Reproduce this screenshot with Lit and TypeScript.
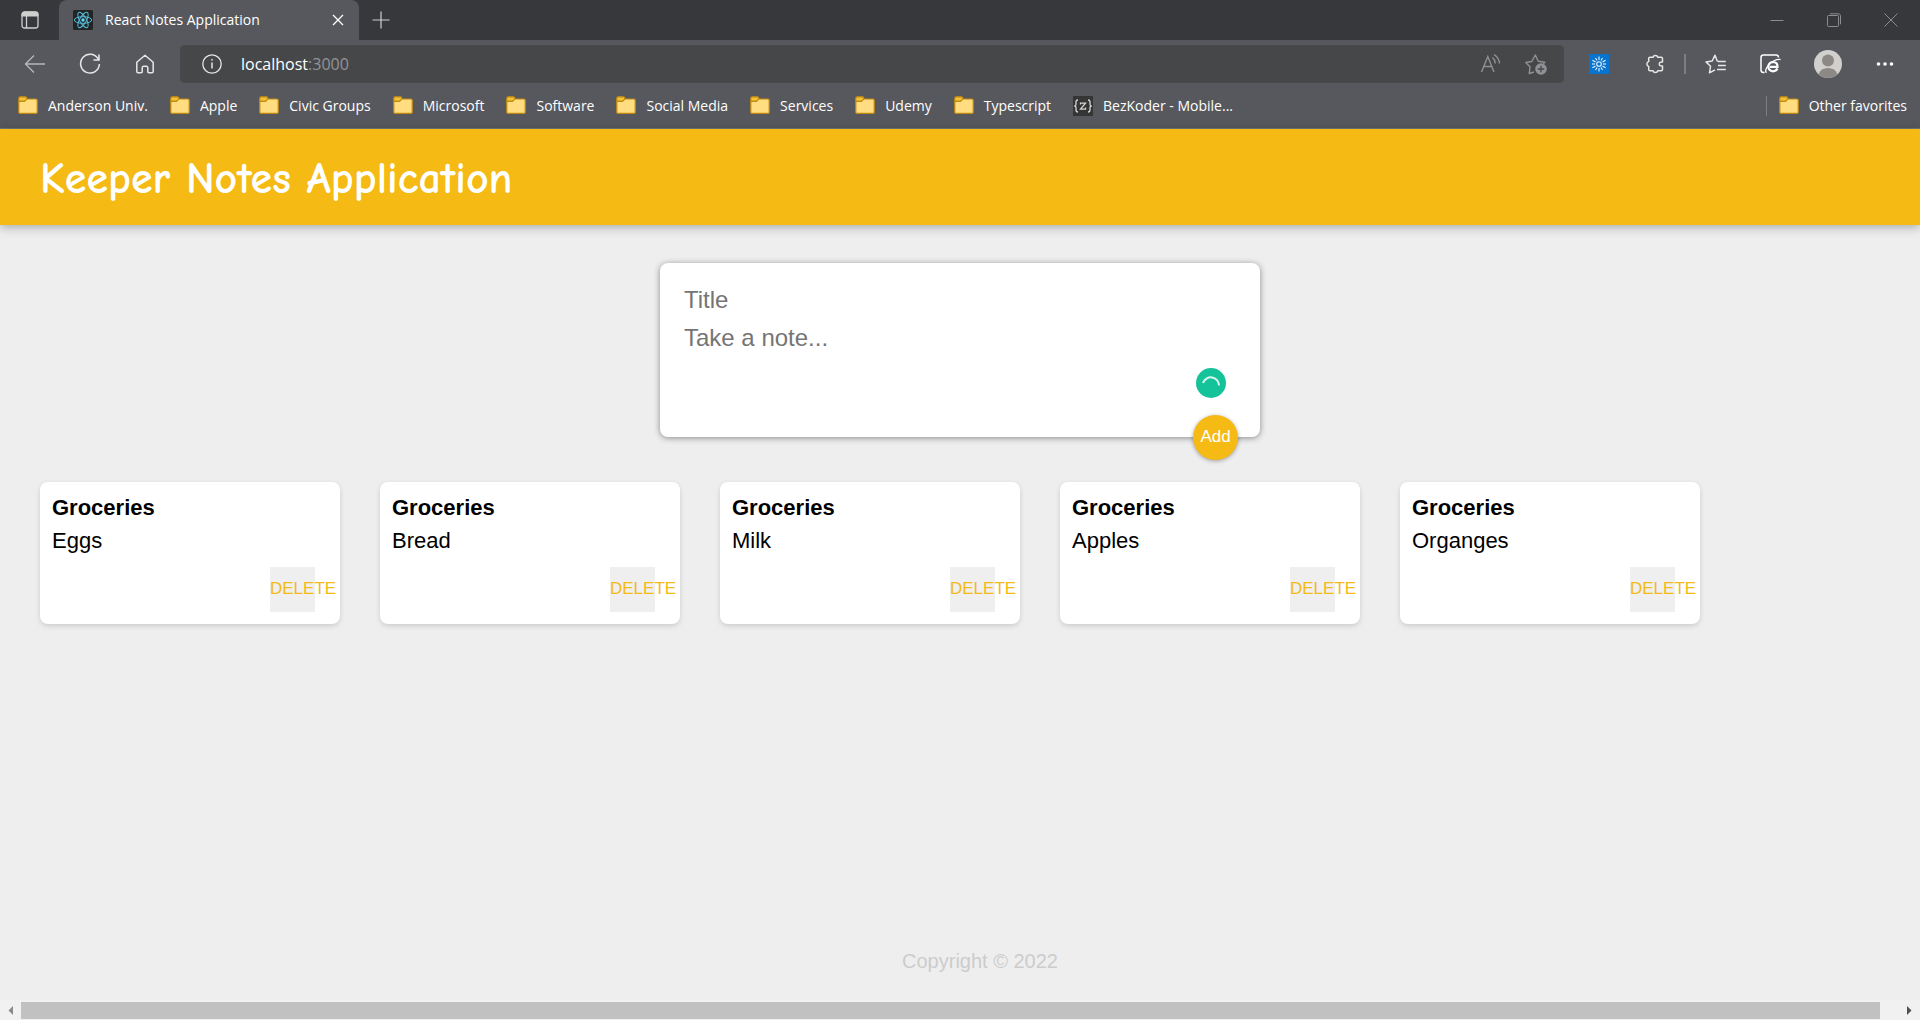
import { LitElement, html, svg, css } from "lit";
import { customElement, property } from "lit/decorators.js";

const folderIcon = html`<svg class="fav-icon" viewBox="0 0 20 20" aria-hidden="true">
  <path d="M0.8 2.2q0-1.4 1.4-1.4h5.2q1.4 0 1.4 1.4v3.2h-8z" fill="#f3c235" stroke="#c08a12" stroke-width="1.2"/>
  <path d="M0.8 5.4h5.6l2.4-2.4h9.2q1.2 0 1.2 1.2v12q0 1.2-1.2 1.2h-16q-1.2 0-1.2-1.2z" fill="#ffdd80" stroke="#c08a12" stroke-width="1.2"/>
</svg>`;

const bezIcon = html`<svg class="fav-icon" viewBox="0 0 20 20" aria-hidden="true">
  <rect width="20" height="20" fill="#353535"/>
  <g fill="none" stroke="#d6d6d6" stroke-width="1.3">
    <path d="M5 4q-2 0-2 2v2.5q0 1.5-1.8 1.5q1.8 0 1.8 1.5v2.5q0 2 2 2M15 4q2 0 2 2v2.5q0 1.5 1.8 1.5q-1.8 0-1.8 1.5v2.5q0 2-2 2"/>
    <path d="M7.5 8.5v-1.4h5l-5 6h5v-1.5"/>
  </g>
</svg>`;

const reactIcon = html`<svg class="i20 plain" viewBox="0 0 20 20" aria-hidden="true">
  <rect width="20" height="20" rx="1.5" fill="#222426"/>
  <g fill="none" stroke="#56bcd6" stroke-width="1">
    <ellipse cx="10" cy="10" rx="8.7" ry="3.3"/>
    <ellipse cx="10" cy="10" rx="8.7" ry="3.3" transform="rotate(60 10 10)"/>
    <ellipse cx="10" cy="10" rx="8.7" ry="3.3" transform="rotate(120 10 10)"/>
  </g>
  <circle cx="10" cy="10" r="1.7" fill="#61dafb"/>
</svg>`;

const rays = [0, 30, 60, 90, 120, 150, 180, 210, 240, 270, 300, 330].map(
  (a) => svg`<path d="M10 6V${a % 60 === 0 ? 2.4 : 3}" transform="rotate(${a} 10 10)"/>`
);

@customElement("browser-chrome")
export class BrowserChrome extends LitElement {
  static styles = css`
    :host { display: block; color: #fff; background: #57585d; font-family: "Segoe UI", "Open Sans", "Noto Sans", sans-serif; font-size: 14px; border-bottom: 1px solid #77787b; }
    button { background: none; border: 0; padding: 0; color: inherit; font: inherit; display: flex; align-items: center; justify-content: center; }
    svg { display: block; fill: none; stroke: currentColor; flex: none; }
    .plain { stroke: none; }
    .i20 { width: 20px; height: 20px; }
    .strip { display: flex; height: 40px; background: #37383c; }
    .side { width: 59px; color: #cfcfcf; }
    .tab { display: flex; align-items: center; width: 300px; box-sizing: border-box; padding: 0 14px; gap: 12px; background: #57585d; border-radius: 8px 8px 0 0; }
    .tab-name { flex: 1; white-space: nowrap; line-height: 18px; padding-bottom: 1px; }
    .new { width: 44px; color: #d0d0d0; }
    .window { display: flex; margin-left: auto; padding-right: 1px; color: #8c8d90; }
    .window button { width: 57px; }
    .bar { display: flex; align-items: center; height: 48px; color: #e6e6e6; }
    .nav { display: flex; padding-left: 7px; }
    .nav button { width: 55px; height: 38px; }
    .back { color: #b5b6b8; }
    .address { display: flex; align-items: center; flex: 1; height: 38px; margin-left: 8px; padding: 0 17px 0 22px; gap: 19px; background: #464749; border-radius: 5px; }
    .url { flex: 1; font-size: 16px; line-height: 22px; color: #fff; }
    .port { color: #939497; }
    .muted { color: #909194; display: flex; gap: 23px; }
    .tools { display: flex; align-items: center; padding: 0 26px 0 25px; }
    .wide { margin-right: 36px; }
    .rule { width: 2px; height: 20px; background: #7c7d80; margin: 0 19px; }
    .star { margin-right: 34px; }
    .ie { margin-right: 33px; color: #fff; }
    .face { margin-right: 34px; }
    .favorites { display: flex; align-items: center; height: 40px; padding: 0 13px 5px 18px; gap: 22px; box-sizing: border-box; }
    .fav { display: flex; align-items: center; gap: 10px; color: inherit; text-decoration: none; white-space: nowrap; }
    .fav-icon { width: 20px; height: 20px; stroke: none; }
    .other { margin-left: auto; border-left: 1px solid #7d7e81; padding-left: 12px; }
  `;

  render() {
    const names = ["Anderson Univ.", "Apple", "Civic Groups", "Microsoft", "Software", "Social Media", "Services", "Udemy", "Typescript"];
    return html`
      <div class="strip">
        <button class="side" aria-label="Tab actions">
          <svg class="i20" viewBox="0 0 20 20"><rect x="2" y="2" width="16" height="16" rx="2.5" stroke-width="1.3"/><path d="M2 4.5Q2 2 4.500 2h11Q18 2 18 4.500V6H2z" fill="currentColor"/><path d="M6.500 6v12" stroke-width="1.3"/></svg>
        </button>
        <div class="tab">
          ${reactIcon}
          <span class="tab-name">React Notes Application</span>
          <button aria-label="Close tab"><svg width="14" height="14" viewBox="0 0 14 14"><path d="M2 2l10 10M12 2L2 12" stroke-width="1.3"/></svg></button>
        </div>
        <button class="new" aria-label="New tab"><svg width="18" height="18" viewBox="0 0 18 18"><path d="M9 .5v17M.5 9h17" stroke-width="1.2"/></svg></button>
        <div class="window">
          <button aria-label="Minimize"><svg width="14" height="14" viewBox="0 0 14 14"><path d="M.5 7.500h13"/></svg></button>
          <button aria-label="Restore"><svg width="14" height="14" viewBox="0 0 14 14"><rect x=".5" y="2.500" width="11" height="11" rx="1"/><path d="M3 .8h8.500q2 0 2 2v8.500"/></svg></button>
          <button aria-label="Close"><svg width="14" height="14" viewBox="0 0 14 14"><path d="M.5.5l13 13M13.500.5l-13 13"/></svg></button>
        </div>
      </div>
      <div class="bar">
        <div class="nav">
          <button class="back" aria-label="Back"><svg width="22" height="20" viewBox="0 0 22 20"><path d="M10 1.500L1.500 10l8.500 8.500M1.500 10H21" stroke-width="1.4"/></svg></button>
          <button aria-label="Refresh"><svg width="22" height="22" viewBox="0 0 22 22"><path d="M19.300 6.200A9.400 9.400 0 1 0 20.400 11M20 1.500v5.500h-5.500" stroke-width="1.500"/></svg></button>
          <button aria-label="Home"><svg width="20" height="20" viewBox="0 0 20 20"><path d="M10 1.200L1.800 8.300v9.200q0 1.200 1.200 1.200h3.200q1 0 1-1v-4q0-1.500 1.500-1.500h2.600q1.500 0 1.500 1.500v4q0 1 1 1H17q1.200 0 1.200-1.200V8.300z" stroke-width="1.500" stroke-linejoin="round"/></svg></button>
        </div>
        <div class="address">
          <svg class="i20" viewBox="0 0 20 20"><circle cx="10" cy="10" r="9.200" stroke-width="1.300"/><path d="M10 8.500v6" stroke-width="1.500"/><circle cx="10" cy="5.800" r=".6" fill="currentColor" stroke-width=".6"/></svg>
          <span class="url">localhost<span class="port">:3000</span></span>
          <div class="muted">
            <button aria-label="Read aloud"><svg width="22" height="22" viewBox="0 0 22 22"><path d="M1.500 19L7.800 3.500 14 19M3.800 13.500h8M12.500 4.500q2.500 2 2.800 6M14 1.500q5 3.200 5.500 9" stroke-width="1.400"/></svg></button>
            <button aria-label="Add to favorites"><svg width="22" height="22" viewBox="0 0 22 22"><path d="M9 19l-4.800 1.500.9-6.500-4.300-4.500 6-1L10.300 2l3 6.300 6.500 1-1.500 1.500" stroke-width="1.400" stroke-linejoin="round"/><circle cx="16" cy="16" r="5.800" fill="currentColor" stroke="none"/><path d="M16 12.800v6.400M12.800 16h6.400" stroke="#464749" stroke-width="1.300"/></svg></button>
          </div>
        </div>
        <div class="tools">
          <button class="wide" aria-label="Loom"><svg class="i20" viewBox="0 0 20 20"><rect width="20" height="20" rx="1" fill="#0874cf" stroke="none"/><g stroke="#e8f3fc" stroke-width="1.100">${rays}<circle cx="10" cy="10" r="2.300"/></g></svg></button>
          <button aria-label="Extensions"><svg class="i20" viewBox="0 0 20 20"><path d="M5 3.200h3a2.500 2.500 0 0 1 4.800 0h3.400q1.300 0 1.300 1.300V8q-3.200-.4-3.200 2t3.200 2v3.500q0 1.300-1.300 1.300h-3.400a2.500 2.500 0 0 1-4.800 0H5q-1.300 0-1.300-1.300V12.400a2.500 2.500 0 0 1 0-4.800V4.500q0-1.300 1.300-1.300z" stroke-width="1.500" stroke-linejoin="round"/></svg></button>
          <span class="rule"></span>
          <button class="star" aria-label="Favorites"><svg width="21" height="20" viewBox="0 0 21 20"><path d="M13.500 7.200L12.200 7 10 1.200 7.200 7l-6.200.9 4.500 4.400-1 6.500 5.500-3M13 7.500h7.800M13 11.500h7.800M12 15.500h8.800" stroke-width="1.500" stroke-linejoin="round"/></svg></button>
          <button class="ie" aria-label="Internet Explorer mode"><svg width="21" height="20" viewBox="0 0 21 20"><path d="M4.500 18.500H3.500q-2.500 0-2.500-2.500V3.500Q1 1 3.500 1h12.500q2.500 0 2.500 2.500" stroke-width="1.500"/><path d="M17.500 14.600q-1.300 2.700-4.500 2.700-4.600-.4-4.600-4.700 0-4.200 4.600-4.600 4.700.2 4.500 4.900H10" stroke-width="2.200"/><path d="M6.500 18.800q-2.500-2.300 2.500-8t11.500-5.300" stroke-width="1.300"/></svg></button>
          <button class="face" aria-label="Profile"><svg class="plain" width="28" height="28" viewBox="0 0 28 28"><circle cx="14" cy="14" r="14" fill="#d2d0ce"/><circle cx="14" cy="10.500" r="6" fill="#8b8885"/><path d="M4.500 24Q7 18 14 18t9.500 6Q19.500 28 14 28T4.500 24z" fill="#8b8885"/></svg></button>
          <button aria-label="Settings and more"><svg class="plain" width="18" height="6" viewBox="0 0 18 6"><circle cx="2.500" cy="3" r="1.800" fill="#fff"/><circle cx="9" cy="3" r="1.800" fill="#fff"/><circle cx="15.500" cy="3" r="1.800" fill="#fff"/></svg></button>
        </div>
      </div>
      <nav class="favorites" aria-label="Favorites">
        ${names.map((n) => html`<a class="fav" href="#">${folderIcon}${n}</a>`)}
        <a class="fav" href="#">${bezIcon}BezKoder - Mobile...</a>
        <a class="fav other" href="#">${folderIcon}Other favorites</a>
      </nav>
    `;
  }
}

@customElement("note-card")
export class NoteCard extends LitElement {
  @property() heading = "";
  @property() content = "";

  static styles = css`
    :host { display: block; width: 300px; box-sizing: border-box; padding: 13px 25px 12px 12px; background: #fff; border-radius: 8px; box-shadow: 0 2px 5px #ccc; font-size: 22px; }
    .title { margin: 0; font-size: 22px; line-height: 26px; }
    .text { margin: 6px 0 12px; line-height: 28px; }
    .row { display: flex; justify-content: flex-end; }
    .delete { width: 45px; height: 45px; padding: 0 0 2px; border: 0; background: #efefef; color: #f5ba13; font: 17px/20px "Liberation Sans", Arial, sans-serif; text-align: left; white-space: nowrap; }
  `;

  render() {
    return html`
      <h2 class="title">${this.heading}</h2>
      <p class="text">${this.content}</p>
      <div class="row"><button class="delete">DELETE</button></div>
    `;
  }
}

@customElement("app-root")
export class AppRoot extends LitElement {
  static styles = css`
    :host { display: flex; flex-direction: column; min-height: 100vh; background: #eee; font-family: "Liberation Sans", Arial, sans-serif; overflow: hidden; }
    .header { display: flex; align-items: center; height: 96px; box-sizing: border-box; padding: 4px 40px 0; background: #f5ba13; box-shadow: 0 2px 10px rgba(0, 0, 0, 0.3); }
    .brand { margin: 0; color: #fff; font: 700 44px/60px "Comic Sans MS", "Comic Neue", "Open Sans", sans-serif; white-space: nowrap; }
    .page { flex: 1; display: flex; flex-direction: column; }
    .form { position: relative; width: 600px; box-sizing: border-box; margin: 38px auto 45px; padding: 18px 24px 14px; background: #fff; border-radius: 8px; box-shadow: 0 1px 6px #8a8a8a; }
    .field { display: block; width: 100%; box-sizing: border-box; border: 0; padding: 4px 0; outline: none; resize: none; background: none; font: 24px/30px "Liberation Sans", Arial, sans-serif; color: #000; }
    .field::placeholder { color: #757575; opacity: 1; }
    .field.note { height: 104px; }
    .helper { position: absolute; right: 34px; bottom: 39px; display: block; }
    .add { position: absolute; right: 22px; bottom: -23px; width: 45px; height: 45px; padding: 0 0 2px; border: 0; border-radius: 50%; background: #f5ba13; color: #fff; box-shadow: 0 1px 4px rgba(0, 0, 0, 0.35); font: 17px/20px "Liberation Sans", Arial, sans-serif; }
    .notes { display: flex; flex-wrap: wrap; gap: 40px; padding: 0 40px; }
    .footer { margin-top: auto; padding: 0 0 27px 40px; text-align: center; color: #ccc; font-size: 20px; line-height: 24px; }
    .copy { margin: 0; }
    .scroll { display: flex; align-items: center; height: 20px; padding-top: 1px; box-sizing: border-box; background: #f1f1f1; }
    .thumb { flex: 1; height: 17px; margin: 0 19px 0 0; background: #c1c1c1; }
    .arrow { width: 21px; height: 17px; flex: none; }
  `;

  render() {
    const items = ["Eggs", "Bread", "Milk", "Apples", "Organges"];
    return html`
      <browser-chrome></browser-chrome>
      <header class="header"><h1 class="brand">Keeper Notes Application</h1></header>
      <main class="page">
        <form class="form">
          <input class="field" name="title" placeholder="Title" aria-label="Title" />
          <textarea class="field note" name="content" placeholder="Take a note..." aria-label="Take a note"></textarea>
          <svg class="helper" width="30" height="30" viewBox="0 0 30 30" aria-hidden="true"><circle cx="15" cy="15" r="15" fill="#15c39a"/><path d="M7 15A8.200 8.200 0 0 1 23 17.500" fill="none" stroke="#d8f5ee" stroke-width="2"/></svg>
          <button class="add" type="button">Add</button>
        </form>
        <section class="notes">
          ${items.map((i) => html`<note-card heading="Groceries" content=${i}></note-card>`)}
        </section>
        <footer class="footer"><p class="copy">Copyright © 2022</p></footer>
      </main>
      <div class="scroll" aria-hidden="true">
        <svg class="arrow" viewBox="0 0 21 17"><path d="M13 4v9L8.500 8.500z" fill="#8a8a8a"/></svg>
        <div class="thumb"></div>
        <svg class="arrow" viewBox="0 0 21 17"><path d="M8 4v9l4.500-4.500z" fill="#505050"/></svg>
      </div>
    `;
  }
}
